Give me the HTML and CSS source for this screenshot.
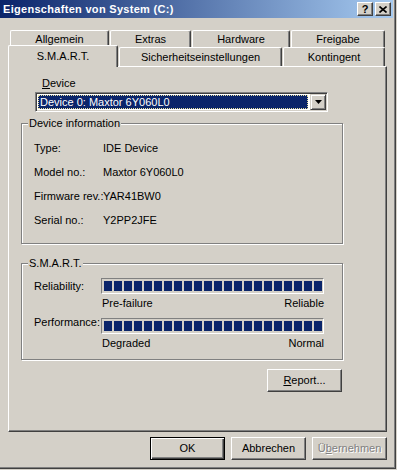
FILE: index.html
```html
<!DOCTYPE html>
<html lang="de">
<head>
  <meta charset="UTF-8">
  <title>Eigenschaften von System (C:)</title>
  <link rel="stylesheet" href="styles.css">
</head>
<body>

  <div class="window">
    <div class="titlebar">
      <span class="title">Eigenschaften von System (C:)</span>
      <div class="caption-btns">
        <span class="cbtn help">?</span>
        <span class="cbtn">
          <svg width="8" height="7" viewBox="0 0 8 7"><path d="M0.5 0.5L7.5 6.5M7.5 0.5L0.5 6.5" stroke="#000" stroke-width="1.6" fill="none"/></svg>
        </span>
      </div>
    </div>

    <!-- Registerkarten -->
    <div class="tabs">
      <div class="tabrow back">
        <div class="tab w-allg">Allgemein</div>
        <div class="tab w-extras">Extras</div>
        <div class="tab w-hw">Hardware</div>
        <div class="tab w-frei">Freigabe</div>
      </div>
      <div class="tabrow front">
        <div class="tab active w-smart">S.M.A.R.T.</div>
        <div class="tab w-sich">Sicherheitseinstellungen</div>
        <div class="tab w-kont">Kontingent</div>
      </div>
    </div>

    <div class="panel">
      <div class="device-label"><u>D</u>evice</div>
      <div class="select">
        <div class="sel-value">Device 0: Maxtor 6Y060L0</div>
        <div class="dd-btn">
          <svg width="7" height="4" viewBox="0 0 7 4"><path d="M0 0H7L3.5 4Z" fill="#000"/></svg>
        </div>
      </div>

      <div class="group info">
        <div class="group-title">Device information</div>
        <div class="info-grid">
          <span>Type:</span><span>IDE Device</span>
          <span>Model no.:</span><span>Maxtor 6Y060L0</span>
          <span>Firmware rev.:</span><span>YAR41BW0</span>
          <span>Serial no.:</span><span>Y2PP2JFE</span>
        </div>
      </div>

      <div class="group smart">
        <div class="group-title">S.M.A.R.T.</div>
        <div class="smart-grid">
          <span class="bar-label">Reliability:</span>
          <div class="bar"></div>
          <span></span>
          <div class="scale"><span>Pre-failure</span><span>Reliable</span></div>
          <span class="bar-label">Performance:</span>
          <div class="bar second"></div>
          <span></span>
          <div class="scale"><span>Degraded</span><span>Normal</span></div>
        </div>
      </div>

      <button class="btn report"><u>R</u>eport...</button>
    </div>

    <div class="buttons">
      <button class="btn default">OK</button>
      <button class="btn">Abbrechen</button>
      <button class="btn disabled">Ü<u>b</u>ernehmen</button>
    </div>
  </div>

</body>
</html>
```

FILE: styles.css
```css
* { box-sizing: border-box; }

body {
  margin: 0;
  background: #d4d0c8;
  font: 11px/13px "Liberation Sans", Arial, sans-serif;
  color: #000;
}

.window {
  width: 396px;
  height: 469px;
  border-right: 1px solid #404040;
  border-bottom: 1px solid #404040;
  box-shadow: inset -1px -1px 0 #808080;
}

/* Titelleiste */
.titlebar {
  height: 18px;
  margin-right: 2px;
  padding: 0 2px 0 3px;
  background: linear-gradient(to right, #0a246a, #a6caf0);
  display: flex;
  align-items: center;
  justify-content: space-between;
}
.title { color: #fff; font-weight: bold; letter-spacing: 0.3px; }
.caption-btns { display: flex; gap: 2px; }
.cbtn {
  width: 16px;
  height: 14px;
  background: #d4d0c8;
  border: 1px solid;
  border-color: #fff #404040 #404040 #fff;
  box-shadow: inset -1px -1px 0 #808080;
  display: flex;
  align-items: center;
  justify-content: center;
}
.cbtn.help { font-weight: bold; font-size: 11px; line-height: 11px; }

/* Registerkarten */
.tabs { margin-top: 12px; }
.tabrow { display: flex; gap: 1px; }
.tabrow.back { height: 17px; padding-left: 10px; }
.tabrow.front { height: 19px; padding-left: 8px; }
.tab {
  border: 1px solid;
  border-color: #fff #404040 transparent #fff;
  border-bottom: none;
  border-radius: 2px 2px 0 0;
  box-shadow: inset -1px 0 0 #808080;
  text-align: center;
  background: #d4d0c8;
}
.back .tab { padding-top: 2px; }
.front .tab { padding-top: 3px; }
.tab.active {
  position: relative;
  z-index: 1;
  margin-top: -2px;
  height: 22px;
  padding-top: 4px;
}
.w-allg { width: 99px; }
.w-extras { width: 81px; }
.w-hw { width: 98px; }
.w-frei { width: 94px; }
.w-smart { width: 110px; }
.w-sich { width: 163px; }
.w-kont { width: 102px; }

/* Hauptbereich */
.panel {
  margin-left: 8px;
  width: 379px;
  height: 366px;
  border: 1px solid;
  border-color: #fff #404040 #404040 #fff;
  box-shadow: inset -1px -1px 0 #808080;
}

.device-label { margin: 10px 0 0 33px; }

.select {
  margin: 2px 0 0 26px;
  width: 293px;
  height: 20px;
  border: 1px solid;
  border-color: #808080 #fff #fff #808080;
  box-shadow: inset 1px 1px 0 #404040, inset -1px -1px 0 #d4d0c8;
  background: #fff;
  padding: 1px;
  display: flex;
}
.sel-value {
  flex: 1;
  margin: 1px 2px 1px 1px;
  height: 14px;
  background: #0a246a;
  color: #fff;
  padding-left: 2px;
  line-height: 14px;
  outline: 1px dotted #e8e0a0;
  outline-offset: -1px;
}
.dd-btn {
  width: 16px;
  height: 16px;
  background: #d4d0c8;
  border: 1px solid;
  border-color: #d4d0c8 #404040 #404040 #d4d0c8;
  box-shadow: inset 1px 1px 0 #fff, inset -1px -1px 0 #808080;
  display: flex;
  align-items: center;
  justify-content: center;
}

/* Gruppenrahmen */
.group {
  margin-left: 12px;
  width: 322px;
  border: 1px solid #808080;
  box-shadow: inset 1px 1px 0 #fff, 1px 1px 0 #fff;
}
.group.info { margin-top: 11px; height: 121px; }
.group.smart { margin-top: 19px; height: 97px; }
.group-title {
  margin: -7px 0 0 6px;
  padding: 0 1px;
  width: fit-content;
  background: #d4d0c8;
}

.info-grid {
  margin-top: 12px;
  padding-left: 12px;
  display: grid;
  grid-template-columns: 69px auto;
  grid-auto-rows: 24px;
  white-space: nowrap;
}

.smart-grid {
  margin-top: 8px;
  padding-left: 12px;
  display: grid;
  grid-template-columns: 67px 223px;
  white-space: nowrap;
}
.bar-label { align-self: center; }
.bar {
  height: 16px;
  border: 1px solid;
  border-color: #808080 #fff #fff #808080;
  padding: 2px 1px 2px 2px;
  background: repeating-linear-gradient(to right, #0a246a 0 8px, transparent 8px 10px) content-box;
}
.bar.second { margin-top: 8px; }
.scale {
  margin-top: 3px;
  padding-left: 1px;
  display: flex;
  justify-content: space-between;
}

/* Schaltflächen */
.btn {
  width: 75px;
  height: 23px;
  padding: 0;
  font: inherit;
  color: #000;
  background: #d4d0c8;
  border: 1px solid;
  border-color: #fff #404040 #404040 #fff;
  box-shadow: inset -1px -1px 0 #808080;
}
.btn.report { display: block; margin: 9px 0 0 258px; }
.btn.default {
  border-color: #000;
  box-shadow: inset 1px 1px 0 #fff, inset -1px -1px 0 #404040, inset -2px -2px 0 #808080;
}
.btn.disabled { color: #808080; text-shadow: 1px 1px 0 #fff; }

.buttons {
  margin-top: 5px;
  padding-right: 8px;
  display: flex;
  justify-content: flex-end;
  gap: 6px;
}
```
